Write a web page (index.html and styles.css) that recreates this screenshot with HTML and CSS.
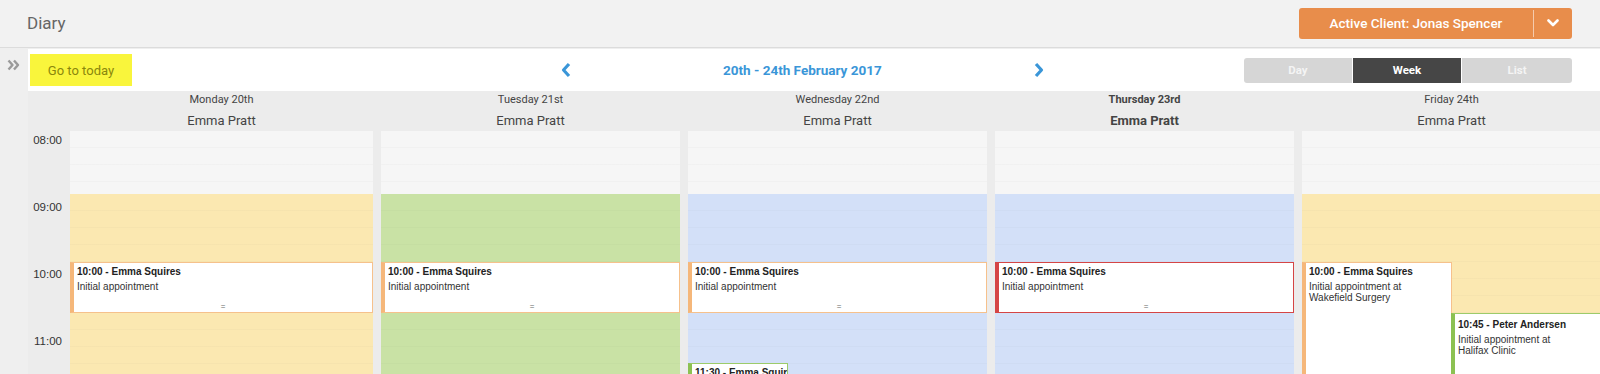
FILE: index.html
```html
<!DOCTYPE html>
<html lang="en">
<head>
    <meta charset="UTF-8">
    <title>Diary</title>
    <link rel="stylesheet" href="styles.css">
</head>
<body>
    <header class="topbar">
        <h1 class="page-title">Diary</h1>
        <div class="client-btn">
            <span class="client-name">Active Client: Jonas Spencer</span>
            <span class="client-caret">
                <svg width="12" height="8" viewBox="0 0 12 8"><path d="M1.5 1.5 L6 6 L10.5 1.5" fill="none" stroke="#fff" stroke-width="2.6" stroke-linecap="round" stroke-linejoin="round"/></svg>
            </span>
        </div>
    </header>
    <div class="main">
        <aside class="side">
            <svg class="collapse" width="13" height="12" viewBox="0 0 13 12"><path d="M1.5 1.5 L5.5 6 L1.5 10.5 M7 1.5 L11 6 L7 10.5" fill="none" stroke="#9a9a9a" stroke-width="2.4" stroke-linejoin="round"/></svg>
        </aside>
        <section class="content">
            <div class="toolbar">
                <button class="today">Go to today</button>
                <div class="nav">
                    <svg width="12" height="16" viewBox="0 0 12 16"><path d="M9 2 L3.5 8 L9 14" fill="none" stroke="#3a96d8" stroke-width="3.2" stroke-linejoin="round"/></svg>
                    <span class="range">20th - 24th February 2017</span>
                    <svg width="12" height="16" viewBox="0 0 12 16"><path d="M3 2 L8.5 8 L3 14" fill="none" stroke="#3a96d8" stroke-width="3.2" stroke-linejoin="round"/></svg>
                </div>
                <div class="views">
                    <span class="view">Day</span>
                    <span class="view active">Week</span>
                    <span class="view">List</span>
                </div>
            </div>

            <div class="cal-head">
                <div></div>
                <div class="day-head"><p class="day-name">Monday 20th</p><p class="staff">Emma Pratt</p></div>
                <div class="day-head"><p class="day-name">Tuesday 21st</p><p class="staff">Emma Pratt</p></div>
                <div class="day-head"><p class="day-name">Wednesday 22nd</p><p class="staff">Emma Pratt</p></div>
                <div class="day-head today-head"><p class="day-name">Thursday 23rd</p><p class="staff">Emma Pratt</p></div>
                <div class="day-head"><p class="day-name">Friday 24th</p><p class="staff">Emma Pratt</p></div>
            </div>

            <div class="cal-body">
                <div class="times">
                    <div class="hour first">08:00</div>
                    <div class="hour">09:00</div>
                    <div class="hour">10:00</div>
                    <div class="hour">11:00</div>
                </div>

                <div class="col">
                    <div class="slot off"></div>
                    <div class="slot yellow"></div>
                    <div class="event orange ev-full">
                        <p class="ev-title">10:00 - Emma Squires</p>
                        <p class="ev-desc">Initial appointment</p>
                        <span class="grip">=</span>
                    </div>
                </div>

                <div class="col">
                    <div class="slot off"></div>
                    <div class="slot green"></div>
                    <div class="event orange ev-full">
                        <p class="ev-title">10:00 - Emma Squires</p>
                        <p class="ev-desc">Initial appointment</p>
                        <span class="grip">=</span>
                    </div>
                </div>

                <div class="col">
                    <div class="slot off"></div>
                    <div class="slot blue"></div>
                    <div class="event orange ev-full">
                        <p class="ev-title">10:00 - Emma Squires</p>
                        <p class="ev-desc">Initial appointment</p>
                        <span class="grip">=</span>
                    </div>
                    <div class="event greenline ev-small">
                        <p class="ev-title">11:30 - Emma Squires</p>
                    </div>
                </div>

                <div class="col">
                    <div class="slot off"></div>
                    <div class="slot blue"></div>
                    <div class="event red ev-full">
                        <p class="ev-title">10:00 - Emma Squires</p>
                        <p class="ev-desc">Initial appointment</p>
                        <span class="grip">=</span>
                    </div>
                </div>

                <div class="col">
                    <div class="slot off"></div>
                    <div class="slot yellow"></div>
                    <div class="event orange ev-half">
                        <p class="ev-title">10:00 - Emma Squires</p>
                        <p class="ev-desc">Initial appointment at<br>Wakefield Surgery</p>
                    </div>
                    <div class="event greenline ev-right">
                        <p class="ev-title">10:45 - Peter Andersen</p>
                        <p class="ev-desc">Initial appointment at<br>Halifax Clinic</p>
                    </div>
                </div>
            </div>
        </section>
    </div>
</body>
</html>
```

FILE: styles.css
```css
* {
    margin: 0;
    padding: 0;
    box-sizing: border-box;
}
body {
    width: 1600px;
    height: 374px;
    overflow: hidden;
    background-color: #efefef;
    font-family: "Roboto", "Liberation Sans", sans-serif;
    color: #444444;
}

/* top bar */
.topbar {
    height: 48px;
    display: flex;
    align-items: center;
    padding: 0 28px 1px 27px;
    background-color: #f2f2f2;
    border-bottom: 1px solid #dcdcdc;
}
.page-title {
    font-size: 17px;
    font-weight: 400;
    color: #666666;
}
.client-btn {
    margin-left: auto;
    width: 273px;
    height: 31px;
    display: flex;
    background-color: #e88d4b;
    border-radius: 3px;
    color: #ffffff;
}
.client-name {
    flex: 1;
    display: flex;
    align-items: center;
    justify-content: center;
    font-size: 13.5px;
    font-weight: 500;
}
.client-caret {
    width: 39px;
    display: flex;
    align-items: center;
    justify-content: center;
    border-left: 1px solid rgba(255, 255, 255, .55);
    margin: 2px 0;
}

/* main */
.main {
    display: flex;
    padding-top: 1px;
}
.side {
    width: 28px;
    flex-shrink: 0;
    padding: 7px 0 0 7px;
}
.content {
    flex: 1;
    min-width: 0;
}

.toolbar {
    height: 42px;
    display: flex;
    align-items: center;
    padding: 0 28px 0 2px;
    background-color: #ffffff;
}
.today {
    width: 102px;
    height: 32px;
    border: 0;
    outline: 0;
    background-color: #f9f53c;
    color: #8a870c;
    font-family: "Roboto", "Liberation Sans", sans-serif;
    font-size: 13px;
}
.nav {
    margin-left: 428px;
    display: flex;
    align-items: center;
}
.range {
    margin: 0 151px;
    color: #3a96d8;
    font-size: 13.5px;
    font-weight: 700;
}
.views {
    margin-left: auto;
    display: flex;
    gap: 1px;
}
.view {
    width: 108px;
    height: 25px;
    line-height: 25px;
    text-align: center;
    background-color: #d6d6d6;
    color: #f4f4f4;
    font-size: 11.5px;
    font-weight: 700;
}
.view:first-child {
    border-radius: 3px 0 0 3px;
}
.view:last-child {
    border-radius: 0 3px 3px 0;
    width: 110px;
}
.view.active {
    background-color: #464646;
    color: #ffffff;
}

/* calendar */
.cal-head,
.cal-body {
    display: grid;
    grid-template-columns: 34px 303px 299px 299px 299px 299px;
    column-gap: 8px;
    background-color: #ececec;
}
.cal-head {
    height: 40px;
}
.day-head {
    text-align: center;
    color: #444444;
}
.day-name {
    font-size: 11px;
    padding-top: 2px;
    line-height: 14px;
}
.staff {
    font-size: 13px;
    padding-top: 6px;
    line-height: 16px;
}
.today-head {
    font-weight: 700;
}

.cal-body {
    height: 264px;
}
.times {
    display: flex;
    flex-direction: column;
    font-family: "Liberation Sans", sans-serif;
    font-size: 11.5px;
    color: #333333;
    text-align: right;
}
.hour {
    height: 67px;
    padding-top: 7px;
}
.hour.first {
    height: 63px;
    padding-top: 3px;
}

.col {
    position: relative;
    display: flex;
    flex-direction: column;
}
.slot {
    background-image: repeating-linear-gradient(to bottom, transparent 0, transparent 16px, rgba(0, 0, 0, .02) 16px, rgba(0, 0, 0, .02) 17px);
}
.slot.off {
    height: 63px;
    background-color: #f6f6f6;
}
.slot.yellow {
    flex: 1;
    background-color: #fbe8b1;
}
.slot.green {
    flex: 1;
    background-color: #c9e2a5;
}
.slot.blue {
    flex: 1;
    background-color: #d3e0f8;
}

/* appointments */
.event {
    position: absolute;
    background-color: #ffffff;
    border: 1px solid #f6c18c;
    border-left: 4px solid #f5b77a;
    padding: 3px 6px 0 3px;
    font-family: "Liberation Sans", sans-serif;
    color: #222222;
    overflow: hidden;
}
.event.red {
    border-color: #d54545;
}
.event.greenline {
    border-color: #9ccb6a;
    border-left-color: #8cc152;
}
.ev-title {
    font-size: 10px;
    font-weight: 700;
    line-height: 12px;
    white-space: nowrap;
}
.ev-desc {
    font-size: 10px;
    line-height: 11px;
    margin-top: 3px;
    color: #333333;
}
.grip {
    position: absolute;
    left: 0;
    right: 0;
    bottom: 1px;
    text-align: center;
    font-size: 8px;
    line-height: 8px;
    color: #666666;
}
.ev-full {
    top: 131px;
    left: 0;
    right: 0;
    height: 51px;
}
.ev-small {
    top: 232px;
    left: 0;
    width: 100px;
    height: 40px;
}
.ev-half {
    top: 131px;
    left: 0;
    width: 150px;
    height: 140px;
}
.ev-right {
    top: 182px;
    left: 149px;
    right: -10px;
    height: 100px;
    padding-top: 5px;
}
```
